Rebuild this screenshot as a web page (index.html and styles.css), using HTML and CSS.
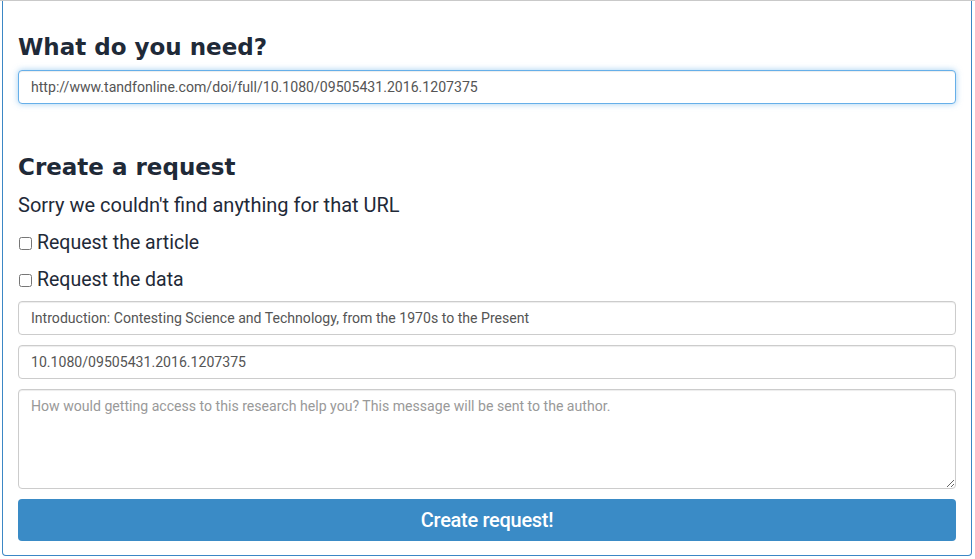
FILE: index.html
```html
<!DOCTYPE html>
<html lang="en">
<head>
<meta charset="utf-8">
<title>What do you need?</title>
<link rel="stylesheet" href="styles.css">
</head>
<body>
<div class="rule"></div>
<div class="panel">
  <h2 class="title first">What do you need?</h2>
  <input class="field focused" type="text" value="http://www.tandfonline.com/doi/full/10.1080/09505431.2016.1207375" autofocus>
  <h2 class="title second">Create a request</h2>
  <p class="notice">Sorry we couldn't find anything for that URL</p>
  <label class="check"><input type="checkbox"><span>Request the article</span></label>
  <label class="check"><input type="checkbox"><span>Request the data</span></label>
  <input class="field" type="text" value="Introduction: Contesting Science and Technology, from the 1970s to the Present">
  <input class="field" type="text" value="10.1080/09505431.2016.1207375">
  <textarea class="field area" placeholder="How would getting access to this research help you? This message will be sent to the author."></textarea>
  <button class="submit" type="button">Create request!</button>
</div>
</body>
</html>
```
FILE: styles.css
```css
html, body {
  margin: 0;
  padding: 0;
  background: #fff;
}
body {
  font-family: Roboto, "Liberation Sans", sans-serif;
  color: #1f2a38;
  width: 975px;
  height: 559px;
  overflow: hidden;
}
.rule {
  height: 1px;
  background: #c9c9c9;
}
.panel {
  box-sizing: border-box;
  margin-left: 2px;
  width: 970px;
  border: 1px solid #3b87c5;
  border-top: none;
  border-radius: 0 0 4px 4px;
  padding: 0 15px 14px 15px;
  display: flex;
  flex-direction: column;
}
.title {
  font-family: "DejaVu Sans", sans-serif;
  font-weight: 600;
  font-size: 23px;
  line-height: 28px;
  color: #1f2a38;
  margin: 0;
}
.title.first {
  margin-top: 32px;
  margin-bottom: 9px;
}
.title.second {
  margin-top: 49px;
  margin-bottom: 12px;
}
.notice {
  margin: 0 0 7px 0;
  font-size: 20px;
  line-height: 24px;
}
.check {
  display: flex;
  align-items: center;
  font-size: 19.5px;
  line-height: 24px;
  height: 37px;
}
.check input {
  width: 13px;
  height: 13px;
  margin: 2px 5px 0 1px;
}
.check + .field {
  margin-top: 3px;
}
.field {
  box-sizing: border-box;
  width: 100%;
  height: 34px;
  border: 1px solid #ccc;
  border-radius: 4px;
  padding: 6px 12px;
  font-family: Roboto, "Liberation Sans", sans-serif;
  font-size: 14.1px;
  color: #555;
  background: #fff;
  box-shadow: inset 0 1px 1px rgba(0,0,0,.075);
  margin: 0 0 10px 0;
  outline: none;
}
.field.focused {
  border-color: #66afe9;
  box-shadow: inset 0 1px 1px rgba(0,0,0,.075), 0 0 6px rgba(102,175,233,.6);
  margin-bottom: 0;
}
.field.area {
  height: 100px;
  resize: vertical;
  padding-top: 8px;
}
.field.area::placeholder {
  color: #999;
}
.submit {
  height: 42px;
  border: none;
  border-radius: 4px;
  background: #3a8bc6;
  color: #fff;
  font-family: Roboto, "Liberation Sans", sans-serif;
  font-weight: 500;
  font-size: 20px;
  letter-spacing: -0.3px;
  cursor: pointer;
}
```
